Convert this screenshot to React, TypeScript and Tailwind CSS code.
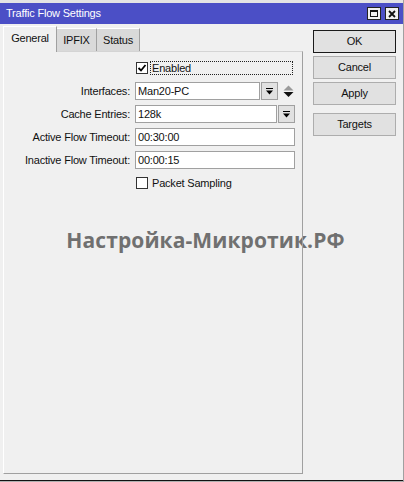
const DropBtn = () => (
  <div className="w-[17px] h-[18px] bg-[#e1e1e1] border border-[#a0a0a0] flex items-center justify-center">
    <svg width="9" height="9" viewBox="0 0 9 9">
      <rect x="1" y="1" width="7" height="1" fill="#000" />
      <path d="M1 3.5 H8 L4.5 7.5 Z" fill="#000" />
    </svg>
  </div>
);

const Check = ({ checked }: { checked?: boolean }) => (
  <div className="w-[12px] h-[12px] bg-white border border-[#333] flex items-center justify-center">
    {checked && (
      <svg width="10" height="10" viewBox="0 0 10 10">
        <path d="M1.5 5 L4 7.5 L8.5 2" stroke="#000" strokeWidth="1.8" fill="none" />
      </svg>
    )}
  </div>
);

const Field = ({ label, children }: { label: string; children: React.ReactNode }) => (
  <div className="flex items-center h-[18px]">
    <div className="w-[127px] text-right pr-px">{label}</div>
    <div className="ml-[4px] flex items-center">{children}</div>
  </div>
);

const Input = ({ value, w }: { value: string; w: string }) => (
  <div className={`${w} h-[18px] bg-white border border-[#a0a0a0] px-[2px] leading-[16px]`}>{value}</div>
);

const Btn = ({ label, primary }: { label: string; primary?: boolean }) => (
  <div
    className={`h-[23px] bg-[#e1e1e1] border flex items-center justify-center ${
      primary ? "border-[#1a1a1a]" : "border-[#adadad]"
    }`}
  >
    {label}
  </div>
);

export default function App() {
  return (
    <div
      className="relative w-[404px] h-[482px] bg-[#f0f0f0] flex flex-col overflow-hidden text-[11px] tracking-[-0.2px] text-[#111] border-r border-[#a0a0a0]"
      style={{ fontFamily: '"Liberation Sans", Arial, sans-serif' }}
    >
      <div className="h-[3px] bg-[#e4e4e4]" />
      <div className="h-[21px] bg-[#4b4fc6] flex items-center justify-between pl-[6px] pr-[4px] text-white">
        <span>Traffic Flow Settings</span>
        <div className="flex gap-[4px]">
          <div className="w-[14px] h-[13px] bg-[#f0f0f0] border border-[#222] flex items-center justify-center">
            <div className="w-[8px] h-[7px] border border-[#111] border-t-2" />
          </div>
          <div className="w-[14px] h-[13px] bg-[#f0f0f0] border border-[#222] flex items-center justify-center">
            <svg width="8" height="8" viewBox="0 0 8 8">
              <path d="M1 1 L7 7 M7 1 L1 7" stroke="#111" strokeWidth="1.8" />
            </svg>
          </div>
        </div>
      </div>

      <div className="flex pl-[3px] mt-[2px]">
        <div className="w-[300px] flex flex-col">
          <div className="flex items-end h-[25px]">
            <div className="relative z-20 h-[26px] -mb-px w-[54px] bg-[#f0f0f0] border-t border-l border-white border-r border-r-[#a0a0a0] flex items-center justify-center pb-[2px]">
              General
            </div>
            <div className="h-[23px] w-[40px] bg-[#d9d9d9] border-t border-white border-r border-r-[#a0a0a0] flex items-center justify-center">
              IPFIX
            </div>
            <div className="h-[23px] w-[43px] bg-[#d9d9d9] border-t border-white border-r border-r-[#a0a0a0] flex items-center justify-center">
              Status
            </div>
          </div>
          <div className="relative z-10 h-[423px] border-t border-t-[#d4d4d4] border-l border-l-white border-r border-r-[#a0a0a0] border-b border-b-[#a0a0a0] flex flex-col">
            <div className="mt-[9px] flex items-center h-[14px]">
              <div className="w-[132px]" />
              <Check checked />
              <div className="ml-[2px] w-[143px] h-[14px] border border-dotted border-[#222] leading-[12px] pl-[1px]">
                Enabled
              </div>
            </div>
            <div className="mt-[7px] flex flex-col gap-[5px]">
              <Field label="Interfaces:">
                <Input value="Man20-PC" w="w-[125px]" />
                <div className="ml-[1px]">
                  <DropBtn />
                </div>
                <svg className="ml-[5px]" width="11" height="13" viewBox="0 0 11 13">
                  <path d="M0.5 5.5 L5.5 0.5 L10.5 5.5 Z" fill="#9a9a9a" />
                  <path d="M0.5 7 L10.5 7 L5.5 12 Z" fill="#111" />
                </svg>
              </Field>
              <Field label="Cache Entries:">
                <Input value="128k" w="w-[142px]" />
                <div className="ml-[1px]">
                  <DropBtn />
                </div>
              </Field>
              <Field label="Active Flow Timeout:">
                <Input value="00:30:00" w="w-[160px]" />
              </Field>
              <Field label="Inactive Flow Timeout:">
                <Input value="00:00:15" w="w-[160px]" />
              </Field>
            </div>
            <div className="mt-[7px] flex items-center h-[14px]">
              <div className="w-[132px]" />
              <Check />
              <span className="ml-[4px]">Packet Sampling</span>
            </div>
          </div>
        </div>

        <div className="ml-[10px] mt-[4px] w-[83px] flex flex-col gap-[3px]">
          <Btn label="OK" primary />
          <Btn label="Cancel" />
          <Btn label="Apply" />
          <div className="mt-[5px]">
            <Btn label="Targets" />
          </div>
        </div>
      </div>

      <div className="flex-1" />
      <div className="h-px bg-[#111]" />
      <div className="h-px bg-[#b0b0b0]" />

      <div
        className="absolute z-0 inset-x-0 top-[225px] pl-[8px] flex justify-center text-[21px] font-bold tracking-[0.1px] text-[#707070]"
        style={{ fontFamily: '"Open Sans", "Noto Sans", sans-serif' }}
      >
        Настройка-Микротик.РФ
      </div>
    </div>
  );
}
